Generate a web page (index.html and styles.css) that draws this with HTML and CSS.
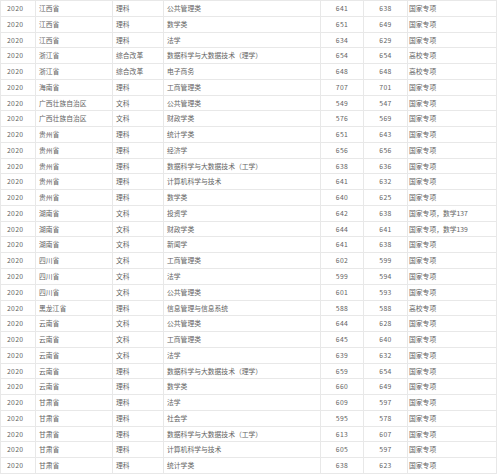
FILE: index.html
```html
<!DOCTYPE html>
<html lang="zh-CN">
<head>
<meta charset="utf-8">
<title>2020 专项录取分数</title>
<link rel="stylesheet" href="styles.css">
</head>
<body>
<div class="table">
  <div class="c num">2020</div><div class="c">江西省</div><div class="c">理科</div><div class="c">公共管理类</div><div class="c num ctr">641</div><div class="c num ctr">638</div><div class="c last">国家专项</div>
  <div class="c num">2020</div><div class="c">江西省</div><div class="c">理科</div><div class="c">数学类</div><div class="c num ctr">651</div><div class="c num ctr">649</div><div class="c last">国家专项</div>
  <div class="c num">2020</div><div class="c">江西省</div><div class="c">理科</div><div class="c">法学</div><div class="c num ctr">634</div><div class="c num ctr">629</div><div class="c last">国家专项</div>
  <div class="c num">2020</div><div class="c">浙江省</div><div class="c">综合改革</div><div class="c">数据科学与大数据技术（理学）</div><div class="c num ctr">654</div><div class="c num ctr">654</div><div class="c last">高校专项</div>
  <div class="c num">2020</div><div class="c">浙江省</div><div class="c">综合改革</div><div class="c">电子商务</div><div class="c num ctr">648</div><div class="c num ctr">648</div><div class="c last">高校专项</div>
  <div class="c num">2020</div><div class="c">海南省</div><div class="c">理科</div><div class="c">工商管理类</div><div class="c num ctr">707</div><div class="c num ctr">701</div><div class="c last">国家专项</div>
  <div class="c num">2020</div><div class="c">广西壮族自治区</div><div class="c">文科</div><div class="c">公共管理类</div><div class="c num ctr">549</div><div class="c num ctr">547</div><div class="c last">国家专项</div>
  <div class="c num">2020</div><div class="c">广西壮族自治区</div><div class="c">文科</div><div class="c">财政学类</div><div class="c num ctr">576</div><div class="c num ctr">569</div><div class="c last">国家专项</div>
  <div class="c num">2020</div><div class="c">贵州省</div><div class="c">理科</div><div class="c">统计学类</div><div class="c num ctr">651</div><div class="c num ctr">643</div><div class="c last">国家专项</div>
  <div class="c num">2020</div><div class="c">贵州省</div><div class="c">理科</div><div class="c">经济学</div><div class="c num ctr">656</div><div class="c num ctr">656</div><div class="c last">国家专项</div>
  <div class="c num">2020</div><div class="c">贵州省</div><div class="c">理科</div><div class="c">数据科学与大数据技术（工学）</div><div class="c num ctr">638</div><div class="c num ctr">636</div><div class="c last">国家专项</div>
  <div class="c num">2020</div><div class="c">贵州省</div><div class="c">理科</div><div class="c">计算机科学与技术</div><div class="c num ctr">641</div><div class="c num ctr">632</div><div class="c last">国家专项</div>
  <div class="c num">2020</div><div class="c">贵州省</div><div class="c">理科</div><div class="c">数学类</div><div class="c num ctr">640</div><div class="c num ctr">625</div><div class="c last">国家专项</div>
  <div class="c num">2020</div><div class="c">湖南省</div><div class="c">文科</div><div class="c">投资学</div><div class="c num ctr">642</div><div class="c num ctr">638</div><div class="c last">国家专项，数学137</div>
  <div class="c num">2020</div><div class="c">湖南省</div><div class="c">文科</div><div class="c">财政学类</div><div class="c num ctr">644</div><div class="c num ctr">641</div><div class="c last">国家专项，数学139</div>
  <div class="c num">2020</div><div class="c">湖南省</div><div class="c">文科</div><div class="c">新闻学</div><div class="c num ctr">641</div><div class="c num ctr">638</div><div class="c last">国家专项</div>
  <div class="c num">2020</div><div class="c">四川省</div><div class="c">文科</div><div class="c">工商管理类</div><div class="c num ctr">602</div><div class="c num ctr">599</div><div class="c last">国家专项</div>
  <div class="c num">2020</div><div class="c">四川省</div><div class="c">文科</div><div class="c">法学</div><div class="c num ctr">599</div><div class="c num ctr">594</div><div class="c last">国家专项</div>
  <div class="c num">2020</div><div class="c">四川省</div><div class="c">文科</div><div class="c">公共管理类</div><div class="c num ctr">601</div><div class="c num ctr">593</div><div class="c last">国家专项</div>
  <div class="c num">2020</div><div class="c">黑龙江省</div><div class="c">理科</div><div class="c">信息管理与信息系统</div><div class="c num ctr">588</div><div class="c num ctr">588</div><div class="c last">高校专项</div>
  <div class="c num">2020</div><div class="c">云南省</div><div class="c">文科</div><div class="c">公共管理类</div><div class="c num ctr">644</div><div class="c num ctr">628</div><div class="c last">国家专项</div>
  <div class="c num">2020</div><div class="c">云南省</div><div class="c">文科</div><div class="c">工商管理类</div><div class="c num ctr">645</div><div class="c num ctr">640</div><div class="c last">国家专项</div>
  <div class="c num">2020</div><div class="c">云南省</div><div class="c">文科</div><div class="c">法学</div><div class="c num ctr">639</div><div class="c num ctr">632</div><div class="c last">国家专项</div>
  <div class="c num">2020</div><div class="c">云南省</div><div class="c">理科</div><div class="c">数据科学与大数据技术（理学）</div><div class="c num ctr">659</div><div class="c num ctr">654</div><div class="c last">国家专项</div>
  <div class="c num">2020</div><div class="c">云南省</div><div class="c">理科</div><div class="c">数学类</div><div class="c num ctr">660</div><div class="c num ctr">649</div><div class="c last">国家专项</div>
  <div class="c num">2020</div><div class="c">甘肃省</div><div class="c">理科</div><div class="c">法学</div><div class="c num ctr">609</div><div class="c num ctr">597</div><div class="c last">国家专项</div>
  <div class="c num">2020</div><div class="c">甘肃省</div><div class="c">理科</div><div class="c">社会学</div><div class="c num ctr">595</div><div class="c num ctr">578</div><div class="c last">国家专项</div>
  <div class="c num">2020</div><div class="c">甘肃省</div><div class="c">理科</div><div class="c">数据科学与大数据技术（工学）</div><div class="c num ctr">613</div><div class="c num ctr">607</div><div class="c last">国家专项</div>
  <div class="c num">2020</div><div class="c">甘肃省</div><div class="c">理科</div><div class="c">计算机科学与技术</div><div class="c num ctr">605</div><div class="c num ctr">597</div><div class="c last">国家专项</div>
  <div class="c num">2020</div><div class="c">甘肃省</div><div class="c">理科</div><div class="c">统计学类</div><div class="c num ctr">638</div><div class="c num ctr">623</div><div class="c last">国家专项</div>
</div>
</body>
</html>
```
FILE: styles.css
```css
html, body {
  margin: 0;
  padding: 0;
  background: #ffffff;
}

body {
  font-family: "Noto Sans CJK SC", "Noto Sans", sans-serif;
  font-size: 6.8px;
  color: #636363;
}

.table {
  display: grid;
  grid-template-columns: 34px 76px 50px 156px 42px 43px 88px;
  grid-auto-rows: 14.78px;
  gap: 1px;
  padding: 1px;
  width: max-content;
  background: #e8e8e8;
}

.c {
  background: #ffffff;
  display: flex;
  align-items: center;
  padding-left: 3px;
  white-space: nowrap;
  overflow: hidden;
  line-height: 1;
}

.c:nth-child(7n+1) {
  padding-left: 6px;
}

.num {
  letter-spacing: 0.35px;
}

.ctr {
  justify-content: center;
  padding-left: 0;
}

.last {
  padding-left: 1px;
}
```
